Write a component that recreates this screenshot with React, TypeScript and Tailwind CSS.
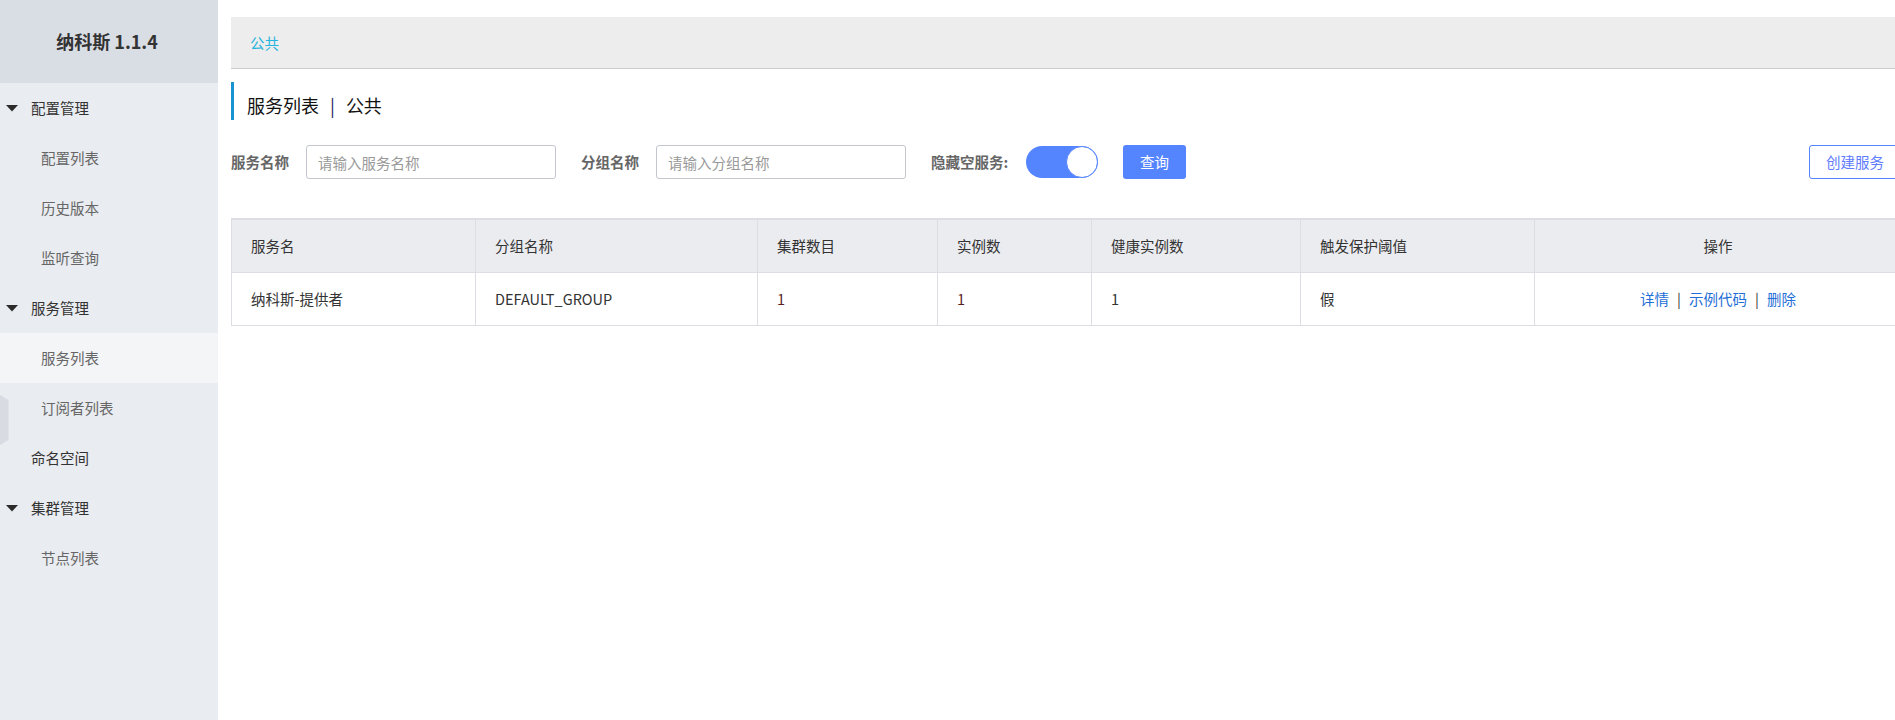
import React from 'react';

const font = '[font-family:"Noto_Sans_CJK_SC","Noto_Sans",sans-serif]';

type MenuItem = { label: string; level: 0 | 1; group?: boolean; active?: boolean };

const menu: MenuItem[] = [
  { label: '配置管理', level: 0, group: true },
  { label: '配置列表', level: 1 },
  { label: '历史版本', level: 1 },
  { label: '监听查询', level: 1 },
  { label: '服务管理', level: 0, group: true },
  { label: '服务列表', level: 1, active: true },
  { label: '订阅者列表', level: 1 },
  { label: '命名空间', level: 0 },
  { label: '集群管理', level: 0, group: true },
  { label: '节点列表', level: 1 },
];

const Caret: React.FC = () => (
  <svg width="12" height="7" viewBox="0 0 12 7" className="mr-[13px] ml-[6px] shrink-0">
    <polygon points="0,0 12,0 6,6.5" fill="#2b2b2b" />
  </svg>
);

const Sidebar: React.FC = () => (
  <aside className="relative w-[218px] shrink-0 h-full bg-[#e9ecf0]">
    <div className="h-[83px] bg-[#d9dde4] flex items-center justify-center pr-[4px] text-[18px] font-bold text-[#333]">
      纳科斯 1.1.4
    </div>
    <ul>
      {menu.map((m) => (
        <li
          key={m.label}
          className={`h-[50px] flex items-center text-[14.5px] ${m.active ? 'bg-[#f4f5f7]' : ''} ${
            m.level === 1 ? 'pl-[41px] text-[#666]' : m.group ? 'text-[#333]' : 'pl-[31px] text-[#333]'
          }`}
        >
          {m.group && <Caret />}
          {m.label}
        </li>
      ))}
    </ul>
    {/* collapse handle */}
    <svg width="9" height="50" viewBox="0 0 9 50" className="absolute left-0 top-[395px]">
      <polygon points="0,0 8.5,5 8.5,45 0,50" fill="#d8dbe1" />
    </svg>
  </aside>
);

const FilterInput: React.FC<{ placeholder: string }> = ({ placeholder }) => (
  <input
    className={`w-[250px] h-[34px] border border-[#c4c6cf] rounded-[3px] px-[11px] text-[14.5px] text-[#333] placeholder:text-[#999] outline-none ${font}`}
    placeholder={placeholder}
  />
);

const cols = [
  { title: '服务名', w: 'w-[244px]' },
  { title: '分组名称', w: 'w-[282px]' },
  { title: '集群数目', w: 'w-[180px]' },
  { title: '实例数', w: 'w-[154px]' },
  { title: '健康实例数', w: 'w-[209px]' },
  { title: '触发保护阈值', w: 'w-[234px]' },
];

export default function App() {
  return (
    <div className={`flex w-full h-[720px] overflow-hidden bg-white ${font}`}>
      <Sidebar />
      <main className="pl-[13px] pt-[17px] shrink-0">
        <div className="w-[1670px]">
          <div className="h-[52px] bg-[#ededed] border-b border-[#cccccc] flex items-center pl-[19px] text-[14.5px] text-[#25b4de]">
            公共
          </div>

          <div className="mt-[13px] h-[38px] border-l-[3px] border-[#1893d1] flex items-center pt-[8px] pl-[13px] text-[18px] text-[#111]">
            <span>服务列表</span>
            <span className="mx-[11px] text-[#1a2466]">|</span>
            <span>公共</span>
          </div>

          <div className="mt-[25px] flex items-center h-[34px] text-[14.5px]">
            <span className="w-[75px] font-bold text-[#666]">服务名称</span>
            <FilterInput placeholder="请输入服务名称" />
            <span className="w-[75px] ml-[25px] font-bold text-[#666]">分组名称</span>
            <FilterInput placeholder="请输入分组名称" />
            <span className="w-[80px] ml-[25px] font-bold text-[#666] whitespace-nowrap">隐藏空服务:</span>
            <div className="ml-[15px] w-[72px] h-[32px] rounded-full bg-[#5584ff] flex items-center justify-end">
              <div className="w-[32px] h-[32px] rounded-full bg-white border border-[#5584ff]" />
            </div>
            <button className="ml-[25px] w-[63px] h-[34px] rounded-[3px] bg-[#5584ff] text-white text-[14.5px]">
              查询
            </button>
            <button className="ml-auto h-[34px] px-[16px] rounded-[3px] border border-[#5584ff] text-[#5f7cff] text-[14.5px] bg-white">
              创建服务
            </button>
          </div>

          <table className="mt-[39px] w-full border-collapse table-fixed text-[14.5px] text-[#333]">
            <thead>
              <tr className="bg-[#ebecf0] h-[53px] border-t-2 border-[#dcdee3]">
                {cols.map((c) => (
                  <th key={c.title} className={`${c.w} font-normal text-left pl-[19px] border-l border-r border-[#dcdee3]`}>
                    {c.title}
                  </th>
                ))}
                <th className="font-normal text-center border-l border-[#dcdee3]">操作</th>
              </tr>
            </thead>
            <tbody>
              <tr className="h-[53px] border-t border-b border-[#dcdee3]">
                <td className="pl-[19px] border-l border-r border-[#dcdee3]">纳科斯-提供者</td>
                <td className="pl-[19px] border-r border-[#dcdee3]">DEFAULT_GROUP</td>
                <td className="pl-[19px] border-r border-[#dcdee3] text-[#5a1e1e]">1</td>
                <td className="pl-[19px] border-r border-[#dcdee3] text-[#5a1e1e]">1</td>
                <td className="pl-[19px] border-r border-[#dcdee3]">1</td>
                <td className="pl-[19px] border-r border-[#dcdee3]">假</td>
                <td className="text-center">
                  <span className="text-[#1f6fd6]">详情</span>
                  <span className="mx-[8px] text-[#333]">|</span>
                  <span className="text-[#1f6fd6]">示例代码</span>
                  <span className="mx-[8px] text-[#333]">|</span>
                  <span className="text-[#1f6fd6]">删除</span>
                </td>
              </tr>
            </tbody>
          </table>
        </div>
      </main>
    </div>
  );
}
